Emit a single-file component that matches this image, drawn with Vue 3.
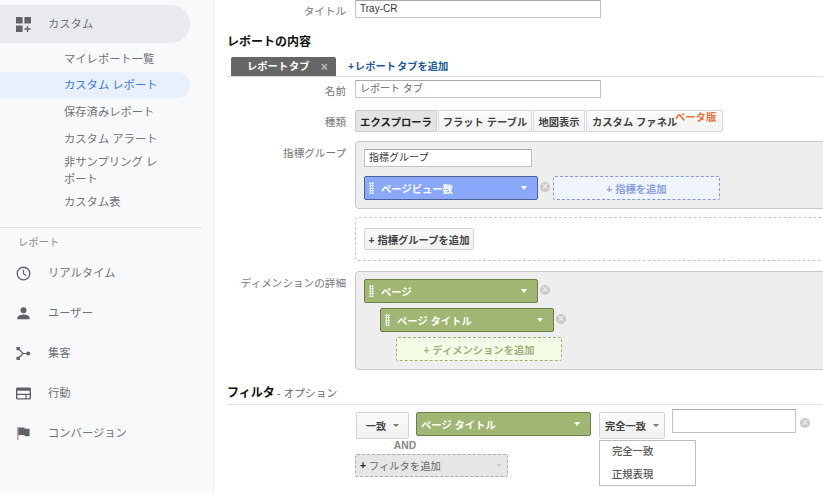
<template>
  <div class="page">
    <aside class="sidebar">
      <div class="nav-main open">
        <svg class="nav-icon" viewBox="0 0 16 16"><path d="M0 0h7v7H0zM9 0h7v7H9zM0 9h7v7H0zM11.500 9.500h1.500v2.500h2.500v1.500H13v2.500h-1.500v-2.500H9V12h2.500z" /></svg>
        <span>カスタム</span>
      </div>
      <ul class="sub-nav">
        <li v-for="item in customItems" :key="item.label" :class="{ current: item.current, tall: item.tall }">{{ item.label }}</li>
      </ul>
      <div class="side-rule"></div>
      <div class="side-caption">レポート</div>
      <div v-for="item in reportItems" :key="item.label" class="nav-main">
        <svg class="nav-icon" viewBox="0 0 16 16" v-html="item.icon"></svg>
        <span>{{ item.label }}</span>
      </div>
    </aside>

    <main class="content">
      <div class="row title-row">
        <label>タイトル</label>
        <div class="text-input wide">Tray-CR</div>
      </div>

      <h2 class="section-title">レポートの内容</h2>
      <div class="tabs">
        <div class="tab">レポート タブ <span class="tab-close">×</span></div>
        <a class="add-tab">+ レポート タブを追加</a>
      </div>

      <div class="row name-row">
        <label>名前</label>
        <div class="text-input wide light">レポート タブ</div>
      </div>

      <div class="row type-row">
        <label>種類</label>
        <div class="btn-group">
          <button class="active w-explorer">エクスプローラ</button>
          <button class="w-flat">フラット テーブル</button>
          <button class="w-map">地図表示</button>
          <button class="w-funnel">カスタム ファネル<span class="beta">ベータ版</span></button>
        </div>
      </div>

      <div class="row metric-row">
        <label>指標グループ</label>
        <div class="group-box metric-box">
          <div class="text-input group-name">指標グループ</div>
          <div class="pill-line">
            <div class="pill blue">
              <span class="grip"></span>
              <span class="pill-text">ページビュー数</span>
              <span class="caret"></span>
            </div>
            <span class="remove">×</span>
            <div class="add-slot blue-slot">+ 指標を追加</div>
          </div>
        </div>
      </div>

      <div class="row add-group-row">
        <label></label>
        <div class="dashed-box">
          <button class="plain-btn">+ 指標グループを追加</button>
        </div>
      </div>

      <div class="row dim-row">
        <label>ディメンションの詳細</label>
        <div class="group-box dim-box">
          <div class="pill-line">
            <div class="pill green">
              <span class="grip"></span>
              <span class="pill-text">ページ</span>
              <span class="caret"></span>
            </div>
            <span class="remove">×</span>
          </div>
          <div class="pill-line indent-1">
            <div class="pill green">
              <span class="grip"></span>
              <span class="pill-text">ページ タイトル</span>
              <span class="caret"></span>
            </div>
            <span class="remove">×</span>
          </div>
          <div class="add-slot green-slot indent-2">+ ディメンションを追加</div>
        </div>
      </div>

      <h2 class="filter-title">フィルタ <span>- オプション</span></h2>

      <div class="filter-area">
        <div class="filter-line">
          <button class="select-btn match">一致<span class="down"></span></button>
          <div class="pill green filter-pill">
            <span class="pill-text">ページ タイトル</span>
            <span class="caret"></span>
          </div>
          <div class="match-wrap">
            <button class="select-btn exact">完全一致<span class="down"></span></button>
            <ul class="menu">
              <li>完全一致</li>
              <li>正規表現</li>
            </ul>
          </div>
          <div class="text-input filter-value"></div>
          <span class="remove filter-remove">×</span>
        </div>
        <div class="and">AND</div>
        <div class="add-filter"><b>+</b> フィルタを追加<span class="down pale"></span></div>
      </div>
    </main>
  </div>
</template>

<script setup>
const customItems = [
  { label: 'マイレポート一覧' },
  { label: 'カスタム レポート', current: true },
  { label: '保存済みレポート' },
  { label: 'カスタム アラート' },
  { label: '非サンプリング レポート', tall: true },
  { label: 'カスタム表' },
];

const reportItems = [
  {
    label: 'リアルタイム',
    icon: '<circle cx="8" cy="8" r="6.700" fill="none" stroke="currentColor" stroke-width="1.400"/><path d="M8 4v4.300l3 1.800" fill="none" stroke="currentColor" stroke-width="1.200"/>',
  },
  {
    label: 'ユーザー',
    icon: '<circle cx="8" cy="4.500" r="3.200"/><path d="M1.500 14v-1.500c0-2.200 4.300-3.400 6.500-3.400s6.500 1.200 6.500 3.400V14z"/>',
  },
  {
    label: '集客',
    icon: '<path d="M0.500 1h3.600v3.600H0.500zM0.500 11.400h3.600V15H0.500z"/><circle cx="13" cy="8" r="2.200"/><path d="M3 3.500L7.500 8H12M7.500 8L3 12.500" fill="none" stroke="currentColor" stroke-width="1.300"/>',
  },
  {
    label: '行動',
    icon: '<path fill-rule="evenodd" d="M1.500 1.500h13A1.500 1.500 0 0 1 16 3v10a1.500 1.500 0 0 1-1.500 1.500h-13A1.500 1.500 0 0 1 0 13V3a1.500 1.500 0 0 1 1.500-1.500zM1.500 5v3.200h13V5zM1.500 9.500V13H10V9.500zM11.300 9.500V13h3.200V9.500z"/>',
  },
  {
    label: 'コンバージョン',
    icon: '<path d="M1.500 1h1v14h-1z" fill="#a5675c"/><path d="M2.500 1.500H9l.6 1.300H14.500v8H9.500l-.6-1.300H2.500z"/>',
  },
];
</script>

<style>
html,
body {
  margin: 0;
  background: #fff;
}
</style>

<style scoped>
* {
  box-sizing: border-box;
}

.page {
  display: flex;
  width: 823px;
  height: 493px;
  overflow: hidden;
  background: #fff;
  font-family: 'Liberation Sans', 'Noto Sans CJK JP', sans-serif;
  color: #444;
}

.sidebar {
  flex: none;
  width: 214px;
  padding-top: 5px;
  background: #f8f9fb;
  border-right: 1px solid #eceef1;
  color: #6f7276;
  font-size: 11.300px;
}

.nav-main {
  display: flex;
  align-items: center;
  width: 190px;
  height: 40px;
  padding-left: 16px;
  line-height: 1;
}

.nav-main span {
  padding-top: 2px;
}

.nav-main.open {
  height: 38px;
  margin-bottom: 2px;
  background: #e8eaed;
  border-radius: 0 19px 19px 0;
}

.nav-icon {
  flex: none;
  width: 15px;
  height: 15px;
  margin-right: 17px;
  fill: #5f6368;
  color: #5f6368;
}

.sub-nav {
  list-style: none;
  margin: 0 0 12px;
  padding: 0;
}

.sub-nav li {
  display: flex;
  align-items: center;
  width: 190px;
  height: 27px;
  padding: 1px 24px 0 64px;
  line-height: 17px;
}

.sub-nav li.current {
  height: 26px;
  padding-top: 0;
  background: #e8f0fe;
  border-radius: 0 13px 13px 0;
  color: #3a78d8;
}

.sub-nav li.tall {
  height: 36px;
}

.side-rule {
  width: 202px;
  height: 1px;
  background: #e3e4e7;
}

.side-caption {
  height: 24px;
  padding: 8px 0 0 18px;
  margin-bottom: 1px;
  font-size: 10.300px;
  line-height: 14px;
  color: #8a8d91;
}

.content {
  flex: 1;
  min-width: 0;
  overflow: hidden;
  font-size: 10.300px;
}

.row {
  display: grid;
  grid-template-columns: 133px 1fr;
  column-gap: 8px;
}

.row label {
  height: 18px;
  padding-right: 1px;
  text-align: right;
  color: #777;
  font-size: 10.600px;
  line-height: 22px;
}

.text-input {
  height: 18px;
  padding: 0 4px;
  background: #fff;
  border: 1px solid #c2c2c2;
  border-top-color: #a8a8a8;
  color: #333;
  line-height: 16px;
  font-size: 10px;
}

.text-input.wide {
  width: 246px;
}

.text-input.light {
  color: #666;
}

.section-title {
  margin: 16px 0 0 13px;
  height: 16px;
  font-size: 12px;
  font-weight: 700;
  line-height: 16px;
  color: #111;
}

.tabs {
  display: flex;
  align-items: flex-end;
  height: 20px;
  margin: 7px 0 0 13px;
  padding-left: 4px;
  border-bottom: 1px solid #ddd;
}

.tab {
  display: flex;
  align-items: center;
  width: 105px;
  height: 19px;
  padding: 0 0 2px 16px;
  background: #666;
  border-radius: 2px 2px 0 0;
  color: #fff;
  font-weight: 700;
  word-spacing: -2px;
}

.tab-close {
  margin: 3px 0 0 11px;
  font-size: 12px;
  color: #bbb;
}

.add-tab {
  align-self: center;
  margin-left: 12px;
  padding-bottom: 3px;
  color: #1c5b94;
  font-weight: 700;
  word-spacing: -2px;
}

.name-row {
  margin-top: 3px;
}

.type-row {
  margin-top: 12px;
}

.type-row label,
.metric-row label,
.dim-row label {
  line-height: 24px;
}

.btn-group {
  display: flex;
  height: 22px;
}

.btn-group button {
  height: 22px;
  padding: 0;
  margin-right: 1px;
  background: linear-gradient(#fbfbfb, #f2f2f2);
  border: 1px solid #d8d8d8;
  font: inherit;
  font-weight: 700;
  color: #444;
  white-space: nowrap;
}

.btn-group button.active {
  background: #e4e4e4;
  border-color: #ccc;
  color: #222;
}

.w-explorer {
  width: 82px;
  border-radius: 2px 0 0 2px;
}

.w-flat {
  width: 94px;
}

.w-map {
  width: 52px;
}

.btn-group .w-funnel {
  position: relative;
  width: 137px;
  padding: 0 0 0 5px;
  margin-right: 0;
  border-radius: 0 2px 2px 0;
  text-align: left;
}

.beta {
  position: absolute;
  top: 0;
  left: 88px;
  color: #e8743b;
  font-size: 10.300px;
  line-height: 13px;
}

.group-box {
  margin-right: -12px;
  background: #eee;
  border: 1px solid #c8c8c8;
  border-radius: 4px 0 0 4px;
}

.metric-row {
  margin-top: 9px;
}

.metric-box {
  height: 68px;
  padding: 7px 8px;
}

.group-name {
  width: 168px;
  margin-bottom: 9px;
}

.pill-line {
  display: flex;
  align-items: flex-start;
}

.pill {
  display: flex;
  align-items: center;
  width: 174px;
  height: 24px;
  padding: 0 10px 0 4px;
  border: 1px solid;
  border-radius: 2px;
  color: #fff;
  font-weight: 700;
}

.pill.blue {
  background: #8aa9fc;
  border-color: #4d6199;
}

.pill.green {
  background: #a0b673;
  border-color: #6b8049;
}

.grip {
  flex: none;
  width: 5px;
  height: 12px;
  margin-right: 7px;
  background-image: radial-gradient(#f2f5ff 0.9px, transparent 1px);
  background-size: 2.500px 2.500px;
}

.pill-text {
  flex: 1;
}

.caret {
  flex: none;
  width: 0;
  height: 0;
  border-left: 3.500px solid transparent;
  border-right: 3.500px solid transparent;
  border-top: 4px solid #fff;
}

.remove {
  flex: none;
  width: 10px;
  height: 10px;
  margin: 6px 3px 0 2px;
  background: #c9c9c9;
  border-radius: 50%;
  color: #eee;
  font-size: 10px;
  font-weight: 700;
  line-height: 10px;
  text-align: center;
}

.add-slot {
  display: flex;
  align-items: center;
  justify-content: center;
  height: 24px;
  border: 1px dashed;
  border-radius: 2px;
  font-weight: 700;
}

.blue-slot {
  width: 167px;
  background: #f0f4fe;
  border-color: #8198e0;
  color: #8da0e2;
}

.green-slot {
  width: 166px;
  background: #f3fce6;
  border-color: #9db36a;
  color: #a3b27a;
}

.add-group-row {
  margin-top: 8px;
}

.dashed-box {
  height: 44px;
  margin-right: -12px;
  padding: 10px 8px;
  border: 1px dashed #c8c8c8;
  border-radius: 4px 0 0 4px;
}

.plain-btn {
  width: 110px;
  height: 22px;
  padding: 0;
  background: linear-gradient(#fafafa, #f1f1f1);
  border: 1px solid #d4d4d4;
  border-radius: 2px;
  font: inherit;
  font-weight: 700;
  color: #444;
}

.dim-row {
  margin-top: 10px;
}

.dim-box {
  height: 99px;
  padding: 7px 8px;
}

.dim-box .pill-line {
  margin-bottom: 5px;
}

.indent-1 {
  margin-left: 16px;
}

.indent-2 {
  margin-left: 32px;
}

.filter-title {
  height: 20px;
  margin: 15px 0 0 13px;
  border-bottom: 1px solid #e2e2e2;
  font-size: 12px;
  font-weight: 700;
  line-height: 17px;
  color: #111;
}

.filter-title span {
  margin-left: -1px;
  font-size: 10.700px;
  font-weight: 400;
  color: #666;
}

.filter-area {
  margin: 4px 0 0 141px;
}

.filter-line {
  display: flex;
  align-items: flex-start;
  height: 30px;
}

.select-btn {
  display: flex;
  align-items: center;
  justify-content: center;
  height: 27px;
  margin-top: 3px;
  padding: 0;
  background: linear-gradient(#fbfbfb, #f1f1f1);
  border: 1px solid #d4d4d4;
  border-radius: 2px;
  font: inherit;
  font-weight: 700;
  color: #444;
}

.match {
  width: 53px;
  margin-left: 1px;
}

.exact {
  width: 66px;
}

.down {
  width: 0;
  height: 0;
  margin-left: 7px;
  border-left: 3.500px solid transparent;
  border-right: 3.500px solid transparent;
  border-top: 3.500px solid #777;
}

.down.pale {
  margin-left: auto;
  border-top-color: #ccc;
}

.filter-pill {
  width: 175px;
  margin: 3px 0 0 7px;
}

.match-wrap {
  position: relative;
  margin-left: 8px;
}

.menu {
  position: absolute;
  top: 31px;
  left: 0;
  z-index: 2;
  width: 97px;
  height: 46px;
  margin: 0;
  padding: 0;
  list-style: none;
  background: #fff;
  border: 1px solid #bdbdbd;
  color: #555;
  font-weight: 500;
}

.menu li {
  height: 23px;
  padding-left: 12px;
  line-height: 21px;
}

.filter-value {
  width: 124px;
  height: 24px;
  margin-left: 7px;
}

.filter-remove {
  margin: 9px 0 0 4px;
}

.and {
  width: 100px;
  height: 15px;
  text-align: center;
  color: #888;
  font-weight: 700;
  line-height: 14px;
}

.add-filter {
  display: flex;
  align-items: center;
  width: 153px;
  height: 23px;
  padding: 0 5px 0 4px;
  background: #e6e6e6;
  border: 1px dashed #aaa;
  border-radius: 2px;
  color: #666;
  white-space: pre;
}

.add-filter b {
  color: #222;
}
</style>
